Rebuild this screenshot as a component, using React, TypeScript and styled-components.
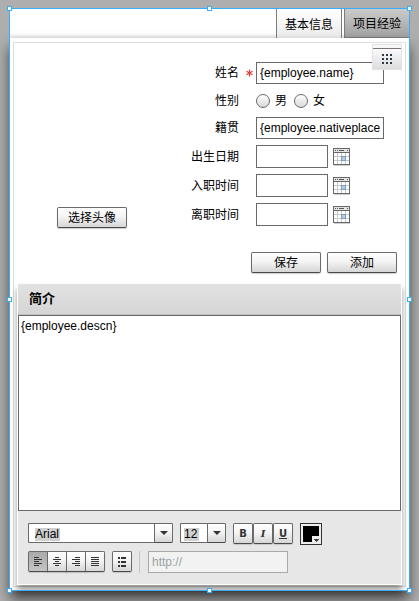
import React from 'react';
import styled, { createGlobalStyle, css } from 'styled-components';

const GlobalStyle = createGlobalStyle`
  *, *::before, *::after { box-sizing: border-box; }
  body {
    margin: 0;
    background: #aeaeae;
    color: #000;
    font: 12px/16px "Liberation Sans", "Noto Sans CJK SC", sans-serif;
  }
  button, input, select, textarea { font: inherit; color: inherit; margin: 0; }
  input:focus, select:focus, textarea:focus { outline: none; }
`;

const raised = css`
  border: 1px solid #6b6b6b;
  border-bottom-color: #4a4a4a;
  border-radius: 2px;
  background: linear-gradient(#ffffff, #f4f4f4 45%, #d6d6d6);
`;

const Stage = styled.main`
  min-height: 100vh;
  padding: 8px 9px 10px;
  display: flex;
  background: #aeaeae;
  overflow: hidden;
`;

const Frame = styled.div`
  position: relative;
  flex: 1;
  min-width: 0;
  display: flex;
  flex-direction: column;
  padding: 1px;
`;

const TabBar = styled.div`
  display: flex;
  justify-content: flex-end;
  gap: 2px;
  height: 29px;
  background: linear-gradient(#fff 85%, #e4e4e4);
`;

const Tab = styled.button<{ $active?: boolean }>`
  width: ${(p) => (p.$active ? 66 : 65)}px;
  padding: 2px 0 0;
  border: 1px solid #7c7c7c;
  border-top: 0;
  ${(p) =>
    p.$active
      ? 'border-bottom: 0; background: linear-gradient(#ffffff, #ececec);'
      : 'border-right: 0; background: linear-gradient(#cacaca, #a2a2a2);'}
`;

const Body = styled.div`
  position: relative;
  flex: 1;
  display: flex;
  padding: 4px 3px 3px;
  background: #fff;
  box-shadow: 0 9px 13px rgba(0, 0, 0, 0.65);
`;

const Panel = styled.section`
  flex: 1;
  min-width: 0;
  display: flex;
  flex-direction: column;
  padding: 19px 3px 1px;
  border: 1px solid #dedede;
`;

const MoreButton = styled.button`
  position: absolute;
  top: 6px;
  right: 7px;
  width: 30px;
  height: 26px;
  padding: 4px 0 0;
  border: 1px solid #e2e2e2;
  background: linear-gradient(#f7f7f7 3px, #777 3px 4px, #fbfbfb 4px, #dddddd);
  display: flex;
  justify-content: center;
  align-items: center;
`;

const Form = styled.form`
  display: flex;
  justify-content: space-between;
  align-items: flex-end;
  padding: 0 5px 11px 40px;
`;

const Fields = styled.div`
  display: flex;
  flex-direction: column;
  align-items: flex-end;
  gap: 26px;
`;

const FieldList = styled.div`
  display: flex;
  flex-direction: column;
  gap: 6px;
`;

const Field = styled.div`
  display: grid;
  grid-template-columns: 56px 17px 128px;
  align-items: center;
  min-height: 21px;
  padding-right: 13px;
`;

const Label = styled.label`
  grid-column: 1;
  justify-self: end;
  white-space: nowrap;
`;

const GroupLabel = styled(Label).attrs({ as: 'span' })``;

const Control = styled.div`
  grid-column: 3;
  display: flex;
  align-items: center;
  gap: 5px;
`;

const TextInput = styled.input`
  width: 100%;
  height: 22px;
  padding: 0 3px;
  border: 1px solid #696969;
  border-radius: 0;
  background: #fff;
`;

const DateInput = styled(TextInput)`
  width: 72px;
  height: 23px;
`;

const IconButton = styled.button`
  display: flex;
  padding: 0;
  border: 0;
  background: none;
`;

const RadioLabel = styled.label`
  display: flex;
  align-items: center;
  gap: 5px;
  margin-right: 2px;
`;

const Radio = styled.input`
  appearance: none;
  width: 14px;
  height: 14px;
  border: 1px solid #696969;
  border-radius: 50%;
  background: linear-gradient(#fff, #d8d8d8);
`;

const Actions = styled.div`
  display: flex;
  gap: 6px;
`;

const Button = styled.button`
  ${raised}
  width: 70px;
  height: 21px;
  padding: 0;
  box-shadow: 0 1px 1px rgba(0, 0, 0, 0.2);
`;

const AvatarButton = styled(Button)`
  margin-bottom: 45px;
`;

const Editor = styled.section`
  flex: 1;
  display: flex;
  flex-direction: column;
  border: 1px solid #fff;
  border-top: 0;
  background: #e7e7e7;
  box-shadow: 0 5px 6px rgba(0, 0, 0, 0.4);
`;

const EditorTitle = styled.h2`
  margin: 0;
  padding: 7px 11px;
  height: 31px;
  font-size: 13px;
  line-height: 16px;
  border-bottom: 1px solid #c0c0c0;
  background: linear-gradient(#e2e2e2, #d5d5d5);
`;

const Description = styled.textarea`
  flex: 1;
  min-height: 120px;
  padding: 2px;
  border: 1px solid #696969;
  resize: none;
  display: block;
`;

const Toolbar = styled.div`
  display: flex;
  flex-direction: column;
  gap: 6px;
  padding: 12px 10px 11px;
`;

const ToolRow = styled.div`
  display: flex;
  align-items: flex-start;
  gap: 7px;
`;

const Combo = styled.div<{ $width: number }>`
  display: grid;
  grid-template-columns: 1fr 19px;
  width: ${(p) => p.$width}px;
  height: 20px;
`;

const Select = styled.select<{ $inset: number; $mark: number }>`
  grid-area: 1 / 1 / 2 / 3;
  appearance: none;
  min-width: 0;
  padding: 2px 0 0 ${(p) => p.$inset}px;
  border: 1px solid #696969;
  border-radius: 0 2px 2px 0;
  background: linear-gradient(#d0d0d0, #d0d0d0) ${(p) => p.$inset}px 4px / ${(p) => p.$mark}px 13px no-repeat #fff;
`;

const ComboArrow = styled.span`
  ${raised}
  grid-area: 1 / 2;
  z-index: 1;
  border-radius: 0 2px 2px 0;
  display: flex;
  align-items: center;
  justify-content: center;
  pointer-events: none;
`;

const Group = styled.div`
  display: flex;
`;

const Tool = styled.button<{ $pressed?: boolean }>`
  ${raised}
  width: 20px;
  height: 21px;
  padding: 0;
  display: flex;
  align-items: center;
  justify-content: center;
  box-shadow: 0 1px 1px rgba(0, 0, 0, 0.15);
  ${(p) => p.$pressed && 'background: linear-gradient(#aaaaaa, #c4c4c4);'}
`;

const AlignGroup = styled(Group)`
  ${Tool} + ${Tool} { margin-left: -1px; }
  ${Tool}:not(:last-child) { border-top-right-radius: 0; border-bottom-right-radius: 0; }
  ${Tool}:not(:first-child) { border-top-left-radius: 0; border-bottom-left-radius: 0; }
`;

const Glyph = styled.span<{ $kind: 'bold' | 'italic' | 'underline' }>`
  font: bold 10px/12px "DejaVu Sans", sans-serif;
  color: #333;
  ${(p) => p.$kind === 'italic' && 'font-family: "DejaVu Serif", serif; font-style: italic;'}
  ${(p) => p.$kind === 'underline' && 'text-decoration: underline;'}
`;

const ColorButton = styled.button`
  width: 22px;
  height: 22px;
  padding: 0;
  border: 1px solid #333;
  background: #eee;
  display: flex;
  align-items: center;
  justify-content: center;
`;

const Divider = styled.span`
  width: 1px;
  height: 22px;
  background: #c6c6c6;
`;

const LinkInput = styled(TextInput)`
  width: 140px;
  border-color: #a9a9a9;
  background: #f2f2f2;
  margin-left: 1px;
  &::placeholder { color: #9aa3a3; opacity: 1; }
`;

const Selection = styled.div`
  position: absolute;
  inset: 0;
  border: 1px solid #39aef7;
  pointer-events: none;
`;

const Handles = styled.div`
  position: absolute;
  inset: -3px;
  display: grid;
  grid-template: repeat(3, 5px) / repeat(3, 5px);
  place-content: space-between;
`;

const Handle = styled.span<{ $row: number; $column: number }>`
  grid-area: ${(p) => p.$row} / ${(p) => p.$column};
  border: 1px solid #39aef7;
  background: #fff;
`;

const RequiredMark = styled.svg`
  justify-self: end;
  margin-right: 3px;
`;

const Calendar = () => (
  <svg width="18" height="18" viewBox="0 0 18 18" shapeRendering="crispEdges" aria-hidden="true">
    <path d="M1 17.5h16" stroke="#cfcfcf" />
    <rect x=".5" y=".5" width="16" height="16" fill="#fff" stroke="#686868" />
    <path d="M1 1h15v3H1z" fill="#e4e4e4" />
    <path d="M2 2.5h1M4 2.5h1M6 2.5h5M14 2.5h1" stroke="#555" />
    <path d="M1 4.5h15" stroke="#686868" />
    <path d="M1 8.5h15M1 12.5h15M4.5 5v11M8.5 5v11M12.5 5v11" stroke="#c9c9c9" />
    <rect x="8.5" y="8.5" width="4" height="4" fill="#b4cbe6" stroke="#7f9dc0" />
  </svg>
);

const Required = () => (
  <RequiredMark width="7" height="8" viewBox="0 0 7 8" aria-label="必填">
    <path d="M3.5 .5v7M.5 2.2l6 3.6M6.5 2.2l-6 3.6" stroke="#e03a3a" strokeWidth="1.2" />
  </RequiredMark>
);

const Arrow = () => (
  <svg width="8" height="4" viewBox="0 0 8 4" aria-hidden="true">
    <path d="M0 0h8L4 4z" fill="#333" />
  </svg>
);

const alignPaths = {
  左对齐: 'M0 .5h5M0 2.5h8M0 4.5h5M0 6.5h8M0 8.5h5',
  居中: 'M2 .5h4M0 2.5h8M2 4.5h4M0 6.5h8M2 8.5h4',
  右对齐: 'M3 .5h5M0 2.5h8M3 4.5h5M0 6.5h8M3 8.5h5',
  两端对齐: 'M0 .5h8M0 2.5h8M0 4.5h8M0 6.5h8M0 8.5h8',
};

const Lines = ({ d }: { d: string }) => (
  <svg width="8" height="9" viewBox="0 0 8 9" shapeRendering="crispEdges" aria-hidden="true">
    <path d={d} stroke="#333" />
  </svg>
);

const handles = [
  [1, 1], [1, 2], [1, 3],
  [2, 1], [2, 3],
  [3, 1], [3, 2], [3, 3],
];

const dates = [
  { id: 'birth', label: '出生日期' },
  { id: 'joined', label: '入职时间' },
  { id: 'left', label: '离职时间' },
];

export default function App() {
  return (
    <Stage>
      <GlobalStyle />
      <Frame>
        <TabBar role="tablist">
          <Tab role="tab" aria-selected="true" $active>基本信息</Tab>
          <Tab role="tab" aria-selected="false">项目经验</Tab>
        </TabBar>
        <Body>
          <Panel>
            <Form onSubmit={(e) => e.preventDefault()}>
              <AvatarButton type="button">选择头像</AvatarButton>
              <Fields>
                <FieldList>
                  <Field>
                    <Label htmlFor="name">姓名</Label>
                    <Required />
                    <TextInput id="name" defaultValue="{employee.name}" />
                  </Field>
                  <Field role="radiogroup" aria-label="性别">
                    <GroupLabel>性别</GroupLabel>
                    <Control>
                      <RadioLabel><Radio type="radio" name="sex" />男</RadioLabel>
                      <RadioLabel><Radio type="radio" name="sex" />女</RadioLabel>
                    </Control>
                  </Field>
                  <Field>
                    <Label htmlFor="place">籍贯</Label>
                    <Control>
                      <TextInput id="place" defaultValue="{employee.nativeplace" />
                    </Control>
                  </Field>
                  {dates.map((d) => (
                    <Field key={d.id}>
                      <Label htmlFor={d.id}>{d.label}</Label>
                      <Control>
                        <DateInput id={d.id} />
                        <IconButton type="button" aria-label={d.label}><Calendar /></IconButton>
                      </Control>
                    </Field>
                  ))}
                </FieldList>
                <Actions>
                  <Button type="submit">保存</Button>
                  <Button type="button">添加</Button>
                </Actions>
              </Fields>
            </Form>
            <Editor>
              <EditorTitle>简介</EditorTitle>
              <Description aria-label="简介" defaultValue="{employee.descn}" />
              <Toolbar>
                <ToolRow>
                  <Combo $width={145}>
                    <Select aria-label="字体" $inset={6} $mark={25}><option>Arial</option></Select>
                    <ComboArrow><Arrow /></ComboArrow>
                  </Combo>
                  <Combo $width={46}>
                    <Select aria-label="字号" $inset={3} $mark={15}><option>12</option></Select>
                    <ComboArrow><Arrow /></ComboArrow>
                  </Combo>
                  <Group>
                    <Tool aria-label="粗体"><Glyph $kind="bold">B</Glyph></Tool>
                    <Tool aria-label="斜体"><Glyph $kind="italic">I</Glyph></Tool>
                    <Tool aria-label="下划线"><Glyph $kind="underline">U</Glyph></Tool>
                  </Group>
                  <ColorButton aria-label="颜色">
                    <svg width="16" height="16" viewBox="0 0 16 16" shapeRendering="crispEdges">
                      <path d="M0 0h16v16H0z" />
                      <path d="M9 10h7v6H9z" fill="#eee" />
                      <path d="M11 13h5v1h-1v1h-1v1h-1v-1h-1v-1h-1z" fill="#444" />
                    </svg>
                  </ColorButton>
                </ToolRow>
                <ToolRow>
                  <AlignGroup>
                    {Object.entries(alignPaths).map(([name, d], i) => (
                      <Tool key={name} aria-label={name} $pressed={i === 0}><Lines d={d} /></Tool>
                    ))}
                  </AlignGroup>
                  <Tool aria-label="列表">
                    <svg width="8" height="10" viewBox="0 0 8 10" shapeRendering="crispEdges">
                      <path d="M0 1h2M3 1h5M0 5h2M3 5h5M0 9h2M3 9h5" stroke="#333" strokeWidth="2" />
                    </svg>
                  </Tool>
                  <Divider />
                  <LinkInput aria-label="链接" placeholder="http://" disabled />
                </ToolRow>
              </Toolbar>
            </Editor>
          </Panel>
          <MoreButton aria-label="更多">
            <svg width="10" height="10" viewBox="0 0 10 10" shapeRendering="crispEdges">
              <path d="M0 1h2M4 1h2M8 1h2M0 5h2M4 5h2M8 5h2M0 9h2M4 9h2M8 9h2" stroke="#2d3b48" strokeWidth="2" />
            </svg>
          </MoreButton>
        </Body>
        <Selection>
          <Handles>
            {handles.map(([row, column]) => (
              <Handle key={`${row}-${column}`} $row={row} $column={column} />
            ))}
          </Handles>
        </Selection>
      </Frame>
    </Stage>
  );
}
